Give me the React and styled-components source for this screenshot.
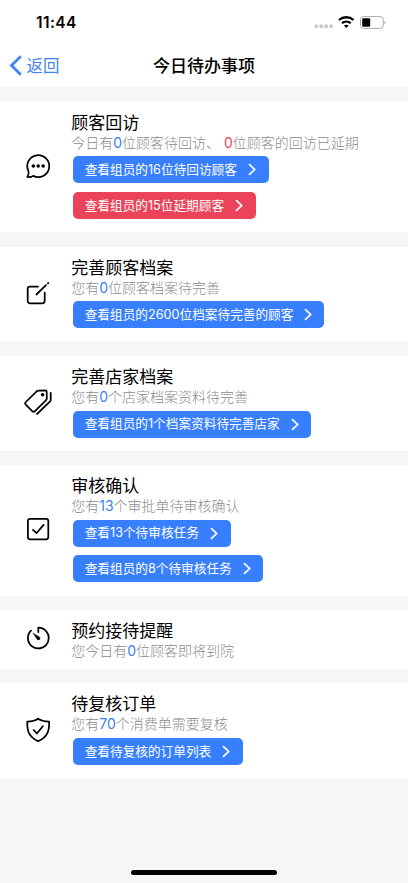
import React from 'react';
import styled, { createGlobalStyle } from 'styled-components';

const GlobalStyle = createGlobalStyle`
  * { box-sizing: border-box; }
  body {
    margin: 0;
    background: #f5f6f8;
    font-family: Inter, "Noto Sans CJK SC", sans-serif;
    color: #000;
  }
`;

const Screen = styled.div`
  width: 408px;
  height: 883px;
  display: flex;
  flex-direction: column;
  overflow: hidden;
  background: #f5f6f8;
`;

const StatusBar = styled.div`
  height: 44px;
  flex: none;
  display: flex;
  justify-content: space-between;
  align-items: center;
  padding: 0 21px 0 36px;
  background: #fff;
`;

const Clock = styled.span`
  font-size: 15.5px;
  font-weight: 600;
  line-height: 20px;
  letter-spacing: 0.4px;
  padding-top: 1px;
`;

const StatusIcons = styled.div`
  display: flex;
  align-items: center;
`;

const NavBar = styled.header`
  height: 43px;
  flex: none;
  display: grid;
  grid-template-columns: 1fr auto 1fr;
  align-items: center;
  padding: 0 9px;
  background: #fff;
`;

const BackButton = styled.a`
  display: flex;
  align-items: center;
  gap: 4.5px;
  font-size: 16.5px;
  line-height: 22px;
  color: #4284f1;
`;

const NavTitle = styled.h1`
  margin: 0;
  font-size: 17px;
  font-weight: 500;
  line-height: 22px;
`;

const List = styled.main`
  flex: 1;
  display: flex;
  flex-direction: column;
  gap: 14.4px;
  padding-top: 14.65px;
`;

const Card = styled.section`
  display: flex;
  align-items: center;
  padding: 11px 0 13.1px;
  background: #fff;
`;

const IconSlot = styled.div`
  width: 71.2px;
  flex: none;
  display: flex;
  justify-content: center;
  padding: 0 0 0 5px;
`;

const Body = styled.div`
  display: flex;
  flex-direction: column;
  align-items: flex-start;
`;

const CardTitle = styled.h2`
  margin: 0;
  font-size: 17px;
  font-weight: 400;
  line-height: 20px;
`;

const Summary = styled.p`
  margin: 0;
  height: 15px;
  font-size: 14px;
  font-weight: 300;
  line-height: 19px;
  color: #8c8c8c;
  white-space: pre;
`;

const Count = styled.span`
  font-weight: 400;
  color: ${(p) => (p.$danger ? '#eb4459' : '#397ff5')};
`;

const Actions = styled.div`
  display: flex;
  flex-direction: column;
  align-items: flex-start;
  gap: 8.6px;
  padding: 8.8px 0 0 2px;
`;

const Action = styled.button`
  display: flex;
  align-items: center;
  justify-content: space-between;
  width: ${(p) => p.$width}px;
  height: 27px;
  border: 0;
  border-radius: 5px;
  padding: 0 12.3px 0 11.5px;
  font: 400 12.67px/20px Inter, "Noto Sans CJK SC", sans-serif;
  white-space: nowrap;
  color: #fff;
  background: ${(p) => (p.$danger ? '#eb445a' : '#387fff')};
`;

const HomeArea = styled.footer`
  height: 13.4px;
  flex: none;
  display: flex;
  justify-content: center;
`;

const HomeIndicator = styled.div`
  width: 146px;
  height: 5px;
  border-radius: 3px;
  background: #000;
`;

const Glyph = ({ children }) => (
  <svg width="28" height="28" viewBox="0 0 28 28" fill="none" stroke="#000" strokeWidth="1.75" strokeLinecap="round" strokeLinejoin="round">
    {children}
  </svg>
);

const icons = {
  chat: (
    <Glyph>
      <path d="M4.5 19.2A11 11 0 1 1 9.2 23.9C7.6 24.9 5.4 25.3 3.3 25C4.5 23.4 4.9 21.2 4.5 19.2Z" />
      <g fill="#000" stroke="none">
        <circle cx="9.3" cy="14" r="1.8" />
        <circle cx="14.2" cy="14" r="1.8" />
        <circle cx="19.1" cy="14" r="1.8" />
      </g>
    </Glyph>
  ),
  edit: (
    <Glyph>
      <path d="M14 7.5H6A2.3 2.3 0 0 0 3.7 9.8V22A2.3 2.3 0 0 0 6 24.3H18.4A2.3 2.3 0 0 0 20.7 22V13.6" />
      <path d="M12.4 15.5L22 6.2" />
      <path d="M24 4.3L24.2 4.1" strokeWidth="2" />
    </Glyph>
  ),
  tag: (
    <Glyph>
      <path d="M14.4 2.6L21.3 2.3Q22.6 2.3 22.7 3.6L22.8 10.6Q22.8 11.5 22.1 12.2L11 23.1Q9.6 24.4 8.2 23.1L1.8 16.7Q.5 15.3 1.8 14L12.7 3.3Q13.4 2.6 14.4 2.6Z" />
      <path d="M26.7 4.8V11.9Q26.7 12.7 26.1 13.3L13 26" />
      <circle cx="18.6" cy="6.8" r="1.8" fill="#000" stroke="none" />
    </Glyph>
  ),
  check: (
    <Glyph>
      <rect x="3.9" y="3.9" width="20.4" height="20.4" rx="2.2" />
      <path d="M9 14.9L12.5 18.2L19.6 9.9" />
    </Glyph>
  ),
  timer: (
    <Glyph>
      <path d="M14.3 8.1V3.6A10.4 10.4 0 1 1 7 6.6" />
      <path d="M9.2 9.2L15.6 13.2A1.55 1.55 0 1 1 13.3 15.4Z" fill="#000" strokeWidth=".5" />
    </Glyph>
  ),
  shield: (
    <Glyph>
      <path d="M14.2 2.7C11 4.9 7.3 5.4 3.3 5.6C2.9 14.5 4.6 20.6 14.2 25.3C23.8 20.6 25.5 14.5 25.1 5.6C21.1 5.4 17.4 4.9 14.2 2.7Z" />
      <path d="M9.7 14.2L12.9 17.5L18.8 10.2" />
    </Glyph>
  ),
};

const Chevron = () => (
  <svg width="8" height="13" viewBox="0 0 8 13" fill="none" stroke="#fff" strokeWidth="1.7">
    <path d="M1 1.2L6.6 6.5L1 11.8" />
  </svg>
);

const items = [
  {
    icon: 'chat',
    title: '顾客回访',
    summary: <>今日有<Count>0</Count>位顾客待回访、 <Count $danger>0</Count>位顾客的回访已延期</>,
    actions: [
      { label: '查看组员的16位待回访顾客', width: 195.5 },
      { label: '查看组员的15位延期顾客', width: 182.5, danger: true },
    ],
  },
  {
    icon: 'edit',
    title: '完善顾客档案',
    summary: <>您有<Count>0</Count>位顾客档案待完善</>,
    actions: [{ label: '查看组员的2600位档案待完善的顾客', width: 251 }],
  },
  {
    icon: 'tag',
    title: '完善店家档案',
    summary: <>您有<Count>0</Count>个店家档案资料待完善</>,
    actions: [{ label: '查看组员的1个档案资料待完善店家', width: 238 }],
  },
  {
    icon: 'check',
    title: '审核确认',
    summary: <>您有<Count>13</Count>个审批单待审核确认</>,
    actions: [
      { label: '查看13个待审核任务', width: 157.5 },
      { label: '查看组员的8个待审核任务', width: 190 },
    ],
  },
  {
    icon: 'timer',
    title: '预约接待提醒',
    summary: <>您今日有<Count>0</Count>位顾客即将到院</>,
    actions: [],
  },
  {
    icon: 'shield',
    title: '待复核订单',
    summary: <>您有<Count>70</Count>个消费单需要复核</>,
    actions: [{ label: '查看待复核的订单列表', width: 169.5 }],
  },
];

export default function App() {
  return (
    <>
      <GlobalStyle />
      <Screen>
        <StatusBar>
          <Clock>11:44</Clock>
          <StatusIcons>
            <svg width="74" height="16" viewBox="0 0 74 16">
              <g fill="#c8c8c8">
                <rect x="1.6" y="10.6" width="3.5" height="3.5" rx="1" />
                <rect x="6.5" y="10.6" width="3.5" height="3.5" rx="1" />
                <rect x="11.4" y="10.6" width="3.5" height="3.5" rx="1" />
                <rect x="16.3" y="10.6" width="3.5" height="3.5" rx="1" />
              </g>
              <g fill="none" stroke="#000" strokeWidth="2.3">
                <path d="M26 6A11 11 0 0 1 40.6 6" />
                <path d="M28.9 9.2A6.7 6.7 0 0 1 37.7 9.2" />
              </g>
              <path d="M33.3 14L30.9 11.6Q33.3 9.7 35.7 11.6Z" />
              <rect x="47.5" y="2.6" width="22.8" height="11.8" rx="3" fill="none" stroke="#aaa" />
              <rect x="49.2" y="4.3" width="8" height="8.5" rx="1.2" />
              <path d="M71.6 6.5Q73.5 8.5 71.6 10.5Z" fill="#999" />
            </svg>
          </StatusIcons>
        </StatusBar>
        <NavBar>
          <BackButton>
            <svg width="13" height="21" viewBox="0 0 13 21" fill="none" stroke="#4284f1" strokeWidth="2.8">
              <path d="M11.8 1.2L2.5 10.5L11.8 19.8" />
            </svg>
            返回
          </BackButton>
          <NavTitle>今日待办事项</NavTitle>
        </NavBar>
        <List>
          {items.map((item) => (
            <Card key={item.title}>
              <IconSlot>{icons[item.icon]}</IconSlot>
              <Body>
                <CardTitle>{item.title}</CardTitle>
                <Summary>{item.summary}</Summary>
                {item.actions.length > 0 && (
                  <Actions>
                    {item.actions.map((a) => (
                      <Action key={a.label} $width={a.width} $danger={a.danger}>
                        {a.label}
                        <Chevron />
                      </Action>
                    ))}
                  </Actions>
                )}
              </Body>
            </Card>
          ))}
        </List>
        <HomeArea>
          <HomeIndicator />
        </HomeArea>
      </Screen>
    </>
  );
}
